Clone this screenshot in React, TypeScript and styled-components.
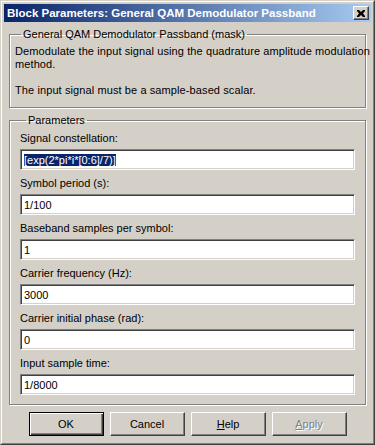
import styled, { createGlobalStyle } from "styled-components";

const GlobalStyle = createGlobalStyle`
  html, body {
    margin: 0;
    padding: 0;
    background: #d4d0c8;
  }
  * {
    box-sizing: border-box;
  }
`;

const fields = [
  { label: "Signal constellation:", value: "[exp(2*pi*i*[0:6]/7)]", selected: true },
  { label: "Symbol period (s):", value: "1/100" },
  { label: "Baseband samples per symbol:", value: "1" },
  { label: "Carrier frequency (Hz):", value: "3000" },
  { label: "Carrier initial phase (rad):", value: "0" },
  { label: "Input sample time:", value: "1/8000" },
];

const App = () => {
  return (
    <>
      <GlobalStyle />
      <SWindow>
        <SInner>
          <STitleBar>
            <STitle>Block Parameters: General QAM Demodulator Passband</STitle>
            <SCloseButton>
              <svg width="8" height="7" viewBox="0 0 8 7">
                <path
                  d="M0 0h2l2 2 2-2h2v1L6 3.5 8 6v1H6L4 5 2 7H0V6l2-2.5L0 1z"
                  fill="#000"
                />
              </svg>
            </SCloseButton>
          </STitleBar>

          <SBody>
            <SGroup>
              <SLegend>General QAM Demodulator Passband (mask)</SLegend>
              <SDescription>
                Demodulate the input signal using the quadrature amplitude modulation
                <br />
                method.
              </SDescription>
              <SDescription>The input signal must be a sample-based scalar.</SDescription>
            </SGroup>

            <SParams>
              <SLegend>Parameters</SLegend>
              {fields.map((f) => (
                <SField key={f.label}>
                  <SLabel>{f.label}</SLabel>
                  <SEdit>
                    {f.selected ? <SSelection>{f.value}</SSelection> : f.value}
                  </SEdit>
                </SField>
              ))}
            </SParams>

            <SButtonRow>
              <SButton $default>OK</SButton>
              <SButton>Cancel</SButton>
              <SButton>
                <u>H</u>elp
              </SButton>
              <SButton disabled>
                <u>A</u>pply
              </SButton>
            </SButtonRow>
          </SBody>
        </SInner>
      </SWindow>
    </>
  );
};

export default App;

const SWindow = styled.div`
  width: 375px;
  height: 445px;
  border: 1px solid;
  border-color: #d4d0c8 #404040 #404040 #d4d0c8;
  background: #d4d0c8;
  font-family: "Liberation Sans", Arial, sans-serif;
  font-size: 11px;
  color: #000;
`;

const SInner = styled.div`
  height: 100%;
  border: 1px solid;
  border-color: #ffffff #808080 #808080 #ffffff;
  padding: 2px;
  display: flex;
  flex-direction: column;
`;

const STitleBar = styled.div`
  height: 18px;
  display: flex;
  align-items: center;
  justify-content: space-between;
  padding: 0 2px 0 3px;
  background: linear-gradient(to right, #0a246a, #a6caf0);
`;

const STitle = styled.span`
  font-weight: bold;
  font-size: 11.5px;
  color: #ffffff;
  white-space: nowrap;
`;

const SCloseButton = styled.div`
  width: 16px;
  height: 14px;
  display: flex;
  align-items: center;
  justify-content: center;
  background: #d4d0c8;
  border: 1px solid;
  border-color: #ffffff #404040 #404040 #ffffff;
  box-shadow: inset -1px -1px #808080;
`;

const SBody = styled.div`
  flex: 1;
  padding: 6px 5px 0 5px;
  display: flex;
  flex-direction: column;
`;

const SGroup = styled.fieldset`
  margin: 0;
  padding: 4px 4px 10px 5px;
  border: 1px solid #808080;
  box-shadow: inset 1px 1px #ffffff, 1px 1px #ffffff;
  min-width: 0;
`;

const SParams = styled(SGroup)`
  margin-top: 6px;
  padding: 2px 10px 9px 10px;
`;

const SLegend = styled.legend`
  padding: 0 2px;
  margin-left: 6px;
  line-height: 13px;
`;

const SDescription = styled.p`
  margin: 0 0 13px 0;
  line-height: 13px;
  letter-spacing: 0.1px;
  white-space: nowrap;
  &:last-child {
    margin-bottom: 0;
  }
`;

const SField = styled.div`
  display: flex;
  flex-direction: column;
  gap: 4px;
  margin-top: 7px;
  &:first-of-type {
    margin-top: 3px;
  }
`;

const SLabel = styled.div`
  line-height: 13px;
`;

const SEdit = styled.div`
  height: 21px;
  background: #ffffff;
  border: 1px solid;
  border-color: #808080 #ffffff #ffffff #808080;
  box-shadow: inset 1px 1px #404040, inset -1px -1px #d4d0c8;
  padding: 3px 3px 0 3px;
  line-height: 14px;
  white-space: nowrap;
  overflow: hidden;
`;

const SSelection = styled.span`
  background: #0a246a;
  color: #ffffff;
`;

const SButtonRow = styled.div`
  display: flex;
  justify-content: center;
  gap: 6px;
  padding-top: 7px;
`;

const SButton = styled.button<{ $default?: boolean }>`
  width: 75px;
  height: 24px;
  margin: 0;
  padding: 0;
  font-family: inherit;
  font-size: 11px;
  background: #d4d0c8;
  color: #000;
  border: 1px solid;
  border-color: ${(p) =>
    p.$default ? "#000000" : "#ffffff #404040 #404040 #ffffff"};
  box-shadow: ${(p) =>
    p.$default
      ? "inset 1px 1px #ffffff, inset -1px -1px #404040, inset -2px -2px #808080"
      : "inset -1px -1px #808080"};

  &:disabled {
    color: #808080;
    text-shadow: 1px 1px #ffffff;
  }
`;
